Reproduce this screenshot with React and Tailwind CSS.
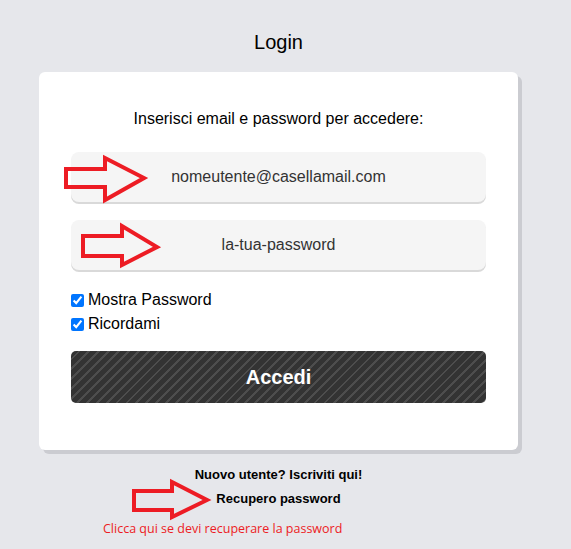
import React from "react";

function Arrow({ points }) {
  return (
    <polygon
      points={points}
      fill="none"
      stroke="#ed1c24"
      strokeWidth="4"
      strokeLinejoin="miter"
    />
  );
}

export default function App() {
  return (
    <div className="relative min-h-[549px] w-[571px] bg-[#e6e7eb] font-['Liberation_Sans',Arial,sans-serif] text-black">
      <div className="flex w-[557px] flex-col items-center pt-[30px]">
        <h1 className="text-[20px] leading-[24px]">Login</h1>
        <div className="mt-[18px] w-[479px] rounded-[6px] bg-white px-[32px] pb-[47px] pt-[38px] shadow-[4px_4px_0_#cbccd1]">
          <p className="text-center text-[16px] leading-[18px]">Inserisci email e password per accedere:</p>
          <div className="mt-[24px] flex h-[50px] items-center justify-center rounded-[8px] bg-[#f5f5f5] text-[16px] text-[#333] shadow-[0_2px_0_#d9d9d9]">
            nomeutente@casellamail.com
          </div>
          <div className="mt-[18px] flex h-[50px] items-center justify-center rounded-[8px] bg-[#f5f5f5] text-[16px] text-[#333] shadow-[0_2px_0_#d9d9d9]">
            la-tua-password
          </div>
          <div className="mt-[18px] flex flex-col text-[16px] leading-[24px]">
            <label className="flex items-center">
              <input type="checkbox" defaultChecked className="m-0 mr-[4px] h-[13px] w-[13px] accent-[#0075ff]" />
              Mostra Password
            </label>
            <label className="flex items-center">
              <input type="checkbox" defaultChecked className="m-0 mr-[4px] h-[13px] w-[13px] accent-[#0075ff]" />
              Ricordami
            </label>
          </div>
          <button className="mt-[15px] flex h-[52px] w-full items-center justify-center rounded-[5px] bg-[#333] bg-[repeating-linear-gradient(135deg,transparent_0px,transparent_5px,rgba(255,255,255,0.13)_5px,rgba(255,255,255,0.13)_7px)] text-[20px] font-bold text-white">
            Accedi
          </button>
        </div>
        <div className="mt-[17px] text-[13px] font-bold leading-[16px]">Nuovo utente? Iscriviti qui!</div>
        <div className="mt-[8px] text-[13px] font-bold leading-[16px]">Recupero password</div>
      </div>
      <div className="ml-[103px] mt-[14px] font-['Open_Sans',sans-serif] text-[12.5px] leading-[16px] text-[#ed1c24]">
        Clicca qui se devi recuperare la password
      </div>
      <svg className="pointer-events-none absolute left-0 top-0" width="571" height="549">
        <Arrow points="66,169 105,169 105,158 144,178 105,200 105,187 66,187" />
        <Arrow points="83,236 122,236 122,226 157,247 122,265 122,256 83,256" />
        <Arrow points="134,491 172,491 172,482 207,500 172,517 172,510 134,510" />
      </svg>
    </div>
  );
}
